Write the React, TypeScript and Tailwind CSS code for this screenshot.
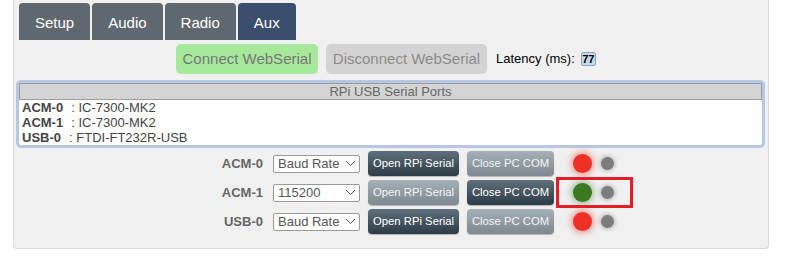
import React from 'react';

type Port = { id: string; device: string };

const ports: Port[] = [
    { id: 'ACM-0', device: 'IC-7300-MK2' },
    { id: 'ACM-1', device: 'IC-7300-MK2' },
    { id: 'USB-0', device: 'FTDI-FT232R-USB' },
];

const rows = [
    { id: 'ACM-0', baud: 'Baud Rate', openOn: true, closeOn: false, connected: false },
    { id: 'ACM-1', baud: '115200', openOn: false, closeOn: true, connected: true },
    { id: 'USB-0', baud: 'Baud Rate', openOn: true, closeOn: false, connected: false },
];

const tabs = ['Setup', 'Audio', 'Radio', 'Aux'];

const Chevron: React.FC = () => (
    <svg width="11" height="7" viewBox="0 0 11 7" className="shrink-0">
        <path d="M1 1 L5.5 5.5 L10 1" fill="none" stroke="#555" strokeWidth="1" />
    </svg>
);

const SerialButton: React.FC<{ label: string; on: boolean; width: string }> = ({ label, on, width }) => (
    <div
        className={`${width} h-[25px] flex items-center justify-center rounded-[4px] text-[11.3px] shadow-[0_1px_1px_rgba(0,0,0,0.25)] ${
            on
                ? 'bg-gradient-to-b from-[#5f707c] to-[#2d3c47] text-white'
                : 'bg-gradient-to-b from-[#a6b0b7] to-[#7d8890] text-[#f2f4f5]'
        }`}
    >
        {label}
    </div>
);

export default function App() {
    return (
        <div className="w-[786px] h-[278px] bg-white font-['Liberation_Sans',Arial,sans-serif]">
            <div className="ml-[13px] w-[756px] h-[249px] bg-[#f0f0f0] border border-t-0 border-[#d9d9d9] rounded-b-[4px]">
                {/* tabs */}
                <div className="flex gap-[2px] pl-[5px] pt-[3px]">
                    {tabs.map(t => (
                        <div
                            key={t}
                            className={`h-[37px] px-4 flex items-center pt-[3px] rounded-t-[4px] text-[15px] text-white ${
                                t === 'Aux' ? 'bg-[#3a4d6c]' : 'bg-[#5f686f]'
                            }`}
                        >
                            {t}
                        </div>
                    ))}
                </div>

                {/* webserial controls */}
                <div className="flex items-center mt-[4px] pl-[162px]">
                    <div className="w-[142px] h-[30px] flex items-center justify-center rounded-[5px] bg-[#a6e99b] text-[#767676] text-[15px]">
                        Connect WebSerial
                    </div>
                    <div className="w-[161px] h-[30px] ml-[8px] flex items-center justify-center rounded-[5px] bg-[#d3d3d3] text-[#8a8a8a] text-[15px]">
                        Disconnect WebSerial
                    </div>
                    <span className="ml-[9px] text-[13px] text-black">Latency (ms):</span>
                    <span className="ml-[6px] w-[15px] h-[14px] flex items-center justify-center bg-[#c6d9ea] border border-[#8ea4b8] rounded-[2px] text-[11px] font-bold text-black">
                        77
                    </span>
                </div>

                {/* port list */}
                <div className="mt-[6px] ml-[2px] mr-[3px] border-[3px] border-[#b5c7e3] rounded-[5px] bg-white">
                    <div className="h-[17px] flex items-center justify-center bg-[#d4d4d4] border border-[#9c9c9c] text-[13px] text-[#666]">
                        RPi USB Serial Ports
                    </div>
                    <div className="pl-[3px] text-[13px] leading-[15px] text-[#444]">
                        {ports.map(p => (
                            <div key={p.id}>
                                <span className="font-bold">{p.id}</span>
                                <span className="ml-[8px]">: {p.device}</span>
                            </div>
                        ))}
                    </div>
                </div>

                {/* serial rows */}
                <div className="relative flex flex-col gap-[4px] mt-[3px] pl-[189px]">
                    {rows.map(r => (
                        <div key={r.id} className="flex items-center h-[25px]">
                            <span className="w-[60px] text-right text-[13px] font-bold text-[#666]">{r.id}</span>
                            <div className="ml-[10px] w-[87px] h-[18px] flex items-center justify-between pl-[4px] pr-[3px] bg-white border border-[#9a9a9a] rounded-[2px] text-[13px] text-[#555]">
                                <span>{r.baud}</span>
                                <Chevron />
                            </div>
                            <div className="ml-[8px]">
                                <SerialButton label="Open RPi Serial" on={r.openOn} width="w-[91px]" />
                            </div>
                            <div className="ml-[8px]">
                                <SerialButton label="Close PC COM" on={r.closeOn} width="w-[87px]" />
                            </div>
                            <div
                                className={`ml-[19px] w-[19px] h-[19px] rounded-full ${
                                    r.connected
                                        ? 'bg-[#3a7a22] shadow-[0_0_6px_2px_rgba(58,122,34,0.45)]'
                                        : 'bg-[#ee3124] shadow-[0_0_6px_2px_rgba(238,49,36,0.45)]'
                                }`}
                            />
                            <div className="ml-[9px] w-[13px] h-[13px] rounded-full bg-[#7d7d7d] shadow-[0_0_4px_1px_rgba(0,0,0,0.25)]" />
                        </div>
                    ))}
                    {/* highlight box around ACM-1 status */}
                    <div className="absolute left-[542px] top-[26px] w-[77px] h-[31px] border-[3px] border-[#e31e26]" />
                </div>
            </div>
        </div>
    );
}
